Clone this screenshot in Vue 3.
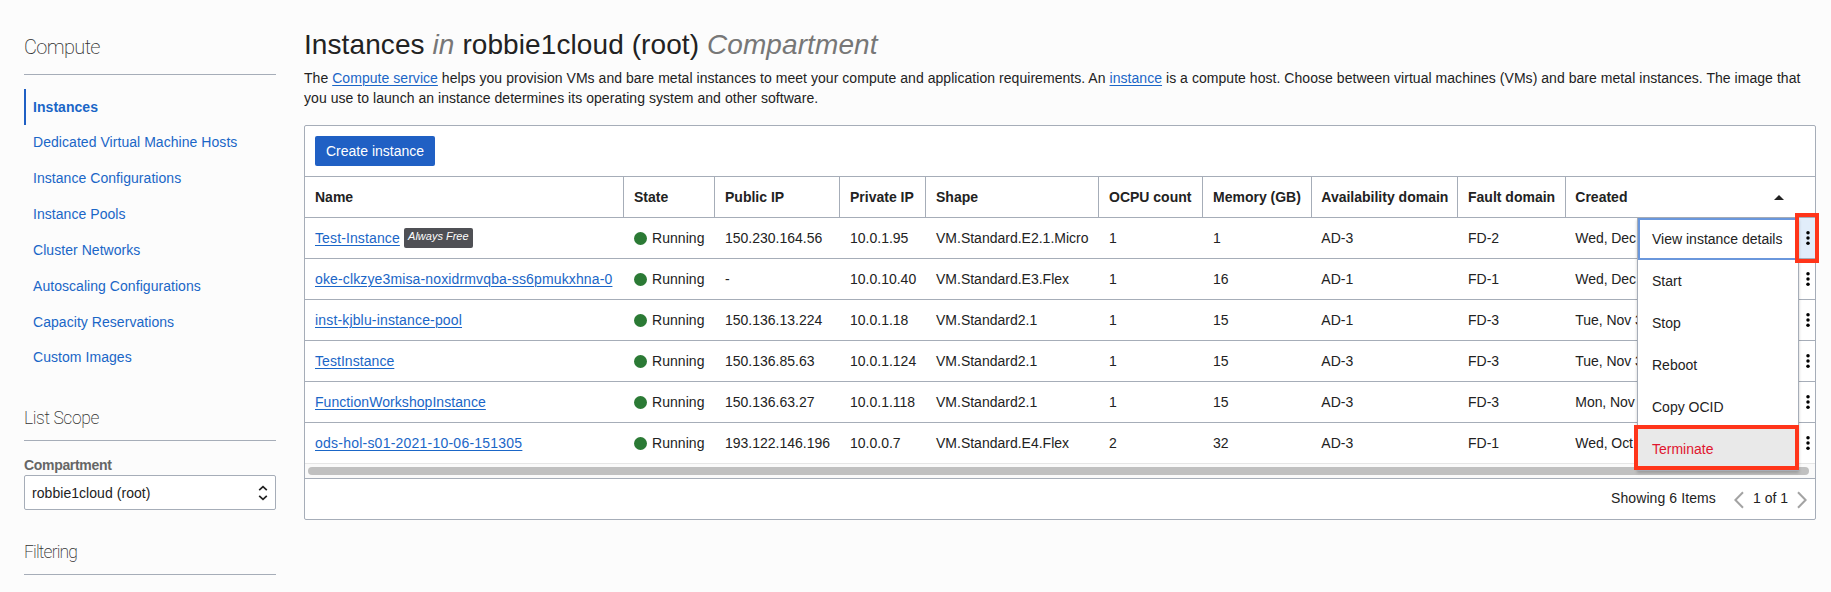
<script setup>
const nav = [
  'Instances',
  'Dedicated Virtual Machine Hosts',
  'Instance Configurations',
  'Instance Pools',
  'Cluster Networks',
  'Autoscaling Configurations',
  'Capacity Reservations',
  'Custom Images',
]
const columns = [
  'Name', 'State', 'Public IP', 'Private IP', 'Shape', 'OCPU count',
  'Memory (GB)', 'Availability domain', 'Fault domain', 'Created',
]
const rows = [
  { name: 'Test-Instance', free: true, cells: ['150.230.164.56', '10.0.1.95', 'VM.Standard.E2.1.Micro', '1', '1', 'AD-3', 'FD-2', 'Wed, Dec'] },
  { name: 'oke-clkzye3misa-noxidrmvqba-ss6pmukxhna-0', cells: ['-', '10.0.10.40', 'VM.Standard.E3.Flex', '1', '16', 'AD-1', 'FD-1', 'Wed, Dec'] },
  { name: 'inst-kjblu-instance-pool', cells: ['150.136.13.224', '10.0.1.18', 'VM.Standard2.1', '1', '15', 'AD-1', 'FD-3', 'Tue, Nov 3'] },
  { name: 'TestInstance', cells: ['150.136.85.63', '10.0.1.124', 'VM.Standard2.1', '1', '15', 'AD-3', 'FD-3', 'Tue, Nov 3'] },
  { name: 'FunctionWorkshopInstance', cells: ['150.136.63.27', '10.0.1.118', 'VM.Standard2.1', '1', '15', 'AD-3', 'FD-3', 'Mon, Nov'] },
  { name: 'ods-hol-s01-2021-10-06-151305', cells: ['193.122.146.196', '10.0.0.7', 'VM.Standard.E4.Flex', '2', '32', 'AD-3', 'FD-1', 'Wed, Oct'] },
]
const actions = ['View instance details', 'Start', 'Stop', 'Reboot', 'Copy OCID', 'Terminate']

// Hyphenated names get slightly looser tracking
const tracking = (name) => {
  const hyphens = name.split('-').length - 1
  return ((hyphens * 0.8) / name.length + 0.06).toFixed(3) + 'px'
}
</script>

<template>
  <div class="page">
    <aside class="sidebar">
      <h2 class="side-title main-title">Compute</h2>
      <nav class="nav">
        <a v-for="(item, i) in nav" :key="item" class="nav-item" :class="{ active: i === 0 }">{{ item }}</a>
      </nav>
      <h3 class="side-title scope">List Scope</h3>
      <label class="label">Compartment</label>
      <div class="select">
        <span>robbie1cloud (root)</span>
        <svg width="10" height="16" viewBox="0 0 10 16" fill="none" stroke="#222" stroke-width="1.7">
          <path d="M1.2 5.2 5 1.6 8.8 5.2M1.2 10.8 5 14.4 8.8 10.8" />
        </svg>
      </div>
      <h3 class="side-title filtering">Filtering</h3>
    </aside>

    <main class="main">
      <h1 class="title">Instances <em>in</em> robbie1cloud (root) <em>Compartment</em></h1>
      <p class="intro">
        The <a>Compute service</a> helps you provision VMs and bare metal instances to meet your compute and application requirements. An <a>instance</a> is a compute host. Choose between virtual machines (VMs) and bare metal instances. The image that<br />
        you use to launch an instance determines its operating system and other software.
      </p>

      <section class="panel">
        <div class="toolbar"><button class="create">Create instance</button></div>
        <div class="grid head">
          <div v-for="c in columns" :key="c" class="cell">{{ c }}</div>
          <svg class="sort" width="10" height="5" viewBox="0 0 10 5"><path d="M0 5 5 0 10 5Z" fill="#222" /></svg>
        </div>
        <div v-for="(r, i) in rows" :key="r.name" class="grid row">
          <div class="cell"><a class="link" :style="{ letterSpacing: tracking(r.name) }">{{ r.name }}</a><span v-if="r.free" class="badge">Always Free</span></div>
          <div class="cell state"><i class="dot"></i>Running</div>
          <div v-for="(c, j) in r.cells" :key="j" class="cell">{{ c }}</div>
          <div class="kebab" :class="{ open: i === 0 }">
            <svg width="4" height="16" viewBox="0 0 4 16">
              <circle cx="2" cy="2.8" r="1.75" /><circle cx="2" cy="8" r="1.75" /><circle cx="2" cy="13.2" r="1.75" />
            </svg>
          </div>
        </div>
        <div class="scroll"><div class="thumb"></div></div>
        <footer class="footer">
          <span class="showing">Showing 6 Items</span>
          <svg class="prev" width="10" height="18" viewBox="0 0 10 18"><path d="M9 1.3 1.4 9 9 16.7" /></svg>
          <span class="pages">1 of 1</span>
          <svg class="next" width="10" height="18" viewBox="0 0 10 18"><path d="M1 1.3 8.6 9 1 16.7" /></svg>
        </footer>

        <div class="menu">
          <div v-for="a in actions" :key="a" class="menu-item" :class="{ focus: a === actions[0], danger: a === 'Terminate' }">{{ a }}</div>
        </div>
        <div class="mark mark-kebab"></div>
        <div class="mark mark-terminate"></div>
      </section>
    </main>
  </div>
</template>

<style>
html, body { background: #fcfcfc; overflow: hidden; }
</style>

<style scoped>
* { box-sizing: border-box; }
.page {
  display: flex;
  gap: 28px;
  width: 1831px;
  height: 592px;
  padding: 0 15px 0 24px;
  overflow: hidden;
  background: #fcfcfc;
  color: #222;
  font-family: "Liberation Sans", Arial, sans-serif;
  font-size: 14px;
  line-height: 20px;
  white-space: nowrap;
}
.sidebar { width: 252px; flex: none; }
.side-title {
  margin: 0;
  border-bottom: 1px solid #a6adb8;
  color: #333;
  font-family: Roboto, "Liberation Sans", sans-serif;
  font-weight: 200;
}
.main-title { height: 75px; padding-top: 35px; font-size: 20px; line-height: 24px; letter-spacing: -0.65px; }
.nav { height: 287px; margin-top: 14px; }
.nav-item {
  display: block;
  height: 36px;
  padding-left: 9px;
  line-height: 36px;
  color: #1a66c7;
  letter-spacing: 0.05px;
}
.nav-item.active { margin-bottom: -1px; border-left: 2px solid #2060c4; padding-left: 7px; font-weight: 700; }
.nav-item:last-child { margin-top: -1px; }
.scope { height: 65px; padding-top: 30px; font-size: 17.5px; line-height: 24px; letter-spacing: -0.4px; }
.label { display: block; margin-top: 14px; height: 20px; color: #666; font-weight: 700; letter-spacing: -0.32px; }
.select {
  display: flex;
  align-items: center;
  justify-content: space-between;
  height: 35px;
  padding: 0 7px;
  border: 1px solid #a6adb8;
  border-radius: 2px;
  background: #fff;
  letter-spacing: 0.05px;
}
.filtering { height: 65px; padding-top: 30px; font-size: 17.5px; line-height: 24px; letter-spacing: -0.85px; }

.main { width: 1512px; flex: none; }
.title { margin: 0; padding-top: 28px; height: 67px; font-size: 28px; line-height: 34px; font-weight: 400; letter-spacing: 0.09px; }
.title em { color: #777; }
.intro { margin: 0; height: 58px; padding-top: 1px; letter-spacing: 0.045px; }
.intro a, .link { color: #1a66c7; text-decoration: underline; text-underline-offset: 2px; text-decoration-thickness: 1px; }

.panel { position: relative; height: 395px; border: 1px solid #a6adb8; border-radius: 2px; background: #fff; }
.toolbar { height: 50px; padding: 10px; }
.create {
  display: block;
  width: 120px;
  height: 30px;
  padding: 0;
  border: 0;
  border-radius: 2px;
  background: #2060c4;
  color: #fff;
  font: inherit;
}
.grid {
  position: relative;
  display: grid;
  grid-template-columns: 319px 91px 125px 86px 173px 104px 109px 146px 108px 249px;
  height: 41px;
  border-top: 1px solid #a6adb8;
  line-height: 40px;
}
.cell { padding-left: 10px; overflow: hidden; }
.cell:nth-child(8), .cell:nth-child(10) { padding-left: 9.3px; }
.row .cell:nth-child(10) { letter-spacing: -0.06px; }
.head { font-weight: 700; }
.head .cell { border-right: 1px solid #a6adb8; }
.head .cell:nth-child(10) { border-right: 0; }
.sort { position: absolute; right: 31px; top: 18px; }
.row .cell:first-child { display: flex; align-items: center; }
.badge {
  height: 20px;
  width: 69px;
  margin-left: 4px;
  border-radius: 2px;
  background: #4f5055;
  color: #fff;
  font-size: 11px;
  font-style: italic;
  line-height: 17px;
  text-align: center;
}
.state { display: flex; align-items: center; gap: 5px; letter-spacing: 0.05px; }
.dot { width: 13px; height: 13px; border-radius: 50%; background: #2b7a35; }
.kebab {
  position: absolute;
  right: 0;
  top: 0;
  width: 16px;
  height: 40px;
  padding: 11.5px 0 0 7.4px;
  line-height: 0;
}
.kebab.open { background: #e1edfa; }
.scroll { height: 16px; padding: 3px 6px 0 3px; border-top: 1px solid #e6e6e6; border-bottom: 1px solid #a6adb8; background: #fafafa; }
.thumb { height: 8px; border-radius: 4px; background: #c0c0c0; }
.footer { display: flex; justify-content: flex-end; height: 40px; padding: 9px 8px 0 0; }
.footer svg { margin-top: 3px; fill: none; stroke: #a3a3a3; stroke-width: 2; }
.showing { letter-spacing: 0.1px; }
.prev { margin-left: 18px; }
.pages { margin: 0 9px; }

.menu {
  position: absolute;
  top: 92px;
  right: 16px;
  width: 162px;
  height: 253px;
  border: 1px solid #a6adb8;
  border-top: 0;
  background: #fff;
  box-shadow: 0 2px 3px rgba(0, 0, 0, 0.2);
}
.menu-item { height: 42px; padding-left: 14px; line-height: 43px; }
.menu-item.focus { border: 2px solid #6a97dc; padding-left: 12px; line-height: 39px; }
.menu-item.danger { background: #e9e9e9; color: #e0162f; }
.mark { position: absolute; border: 4px solid #ff351a; }
.mark-kebab { top: 87px; right: -4px; width: 24px; height: 50px; }
.mark-terminate { top: 299px; right: 16px; width: 165px; height: 45px; }
</style>
